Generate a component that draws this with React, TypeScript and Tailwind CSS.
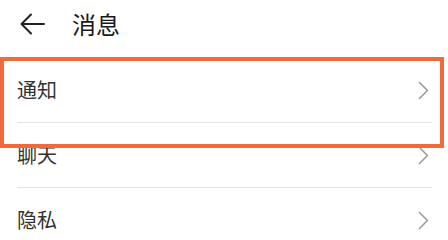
import React from "react";

const items = ["通知", "聊天", "隐私"];

function Chevron() {
  return (
    <svg width="11" height="19" viewBox="0 0 11 19" fill="none" className="shrink-0">
      <path d="M1.5 1.5 L9.5 9.5 L1.5 17.5" stroke="#9a9a9a" strokeWidth="1.6" strokeLinecap="round" strokeLinejoin="round" />
    </svg>
  );
}

export default function App() {
  return (
    <div
      className="relative w-[448px] h-[235px] overflow-hidden bg-white"
      style={{ fontFamily: '"Noto Sans CJK SC", "Noto Sans", sans-serif' }}
    >
      {/* header */}
      <div className="flex items-center h-[47px] pl-[20px]">
        <svg width="25" height="22" viewBox="0 0 25 22" fill="none">
          <path d="M24 11 H2 M11 1.5 L1.5 11 L11 20.5" stroke="#222" strokeWidth="2" strokeLinecap="round" strokeLinejoin="round" />
        </svg>
        <span className="ml-[27px] text-[24px] leading-none text-[#1a1a1a]">消息</span>
      </div>

      {/* list */}
      <div className="mt-[11px] pl-[17px] pr-[19px]">
        {items.map((label, i) => (
          <div key={label}>
            <div className="flex items-center justify-between h-[64px] pr-[0px]">
              <span className="text-[20px] leading-none text-[#333]">{label}</span>
              <Chevron />
            </div>
            {i < items.length - 1 && <div className="h-px bg-[#e3e3e3] mr-[-3px]" />}
          </div>
        ))}
      </div>

      {/* highlight box */}
      <div className="absolute left-0 top-[57px] w-[444px] h-[91px] border-[4.5px] border-[#f06a3d] pointer-events-none" />
    </div>
  );
}
